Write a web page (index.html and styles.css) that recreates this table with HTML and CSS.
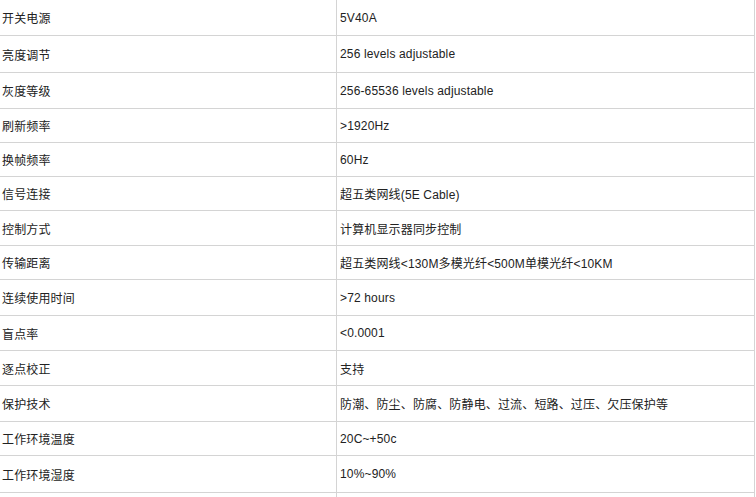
FILE: index.html
```html
<!DOCTYPE html>
<html lang="zh">
<head>
<meta charset="utf-8">
<title>参数</title>
<link rel="stylesheet" href="styles.css">
</head>
<body>
<div class="spec">
  <div class="row h36"><div class="k">开关电源</div><div class="v">5V40A</div></div>
  <div class="row h37"><div class="k">亮度调节</div><div class="v">256 levels adjustable</div></div>
  <div class="row h36"><div class="k">灰度等级</div><div class="v">256-65536 levels adjustable</div></div>
  <div class="row h34"><div class="k">刷新频率</div><div class="v">&gt;1920Hz</div></div>
  <div class="row h34"><div class="k">换帧频率</div><div class="v">60Hz</div></div>
  <div class="row h34"><div class="k">信号连接</div><div class="v">超五类网线(5E Cable)</div></div>
  <div class="row h35"><div class="k">控制方式</div><div class="v">计算机显示器同步控制</div></div>
  <div class="row h34"><div class="k">传输距离</div><div class="v">超五类网线&lt;130M多模光纤&lt;500M单模光纤&lt;10KM</div></div>
  <div class="row h36"><div class="k">连续使用时间</div><div class="v">&gt;72 hours</div></div>
  <div class="row h35"><div class="k">盲点率</div><div class="v">&lt;0.0001</div></div>
  <div class="row h35"><div class="k">逐点校正</div><div class="v">支持</div></div>
  <div class="row h36"><div class="k">保护技术</div><div class="v">防潮、防尘、防腐、防静电、过流、短路、过压、欠压保护等</div></div>
  <div class="row h34"><div class="k">工作环境温度</div><div class="v">20C~+50c</div></div>
  <div class="row h37"><div class="k">工作环境湿度</div><div class="v">10%~90%</div></div>
  <div class="row tail"><div class="k"></div><div class="v"></div></div>
</div>
</body>
</html>
```
FILE: styles.css
```css
html, body {
  margin: 0;
  padding: 0;
  background: #fff;
}
body {
  font-family: "Liberation Sans", Arial, "Noto Sans CJK SC", sans-serif;
  font-size: 12px;
  color: #222;
}
.spec {
  width: 755px;
  border-right: 1px solid #d4d4d4;
  box-sizing: border-box;
}
.row {
  display: grid;
  grid-template-columns: 337px 1fr;
  border-bottom: 1px solid #d4d4d4;
  box-sizing: border-box;
}
.h34 { height: 34px; }
.h35 { height: 35px; }
.h36 { height: 36px; }
.h37 { height: 37px; }
.tail {
  height: 4px;
  border-bottom: none;
}
.k, .v {
  display: flex;
  align-items: center;
  white-space: nowrap;
  letter-spacing: 0.15px;
}
.k {
  padding-left: 2px;
  border-right: 1px solid #d4d4d4;
}
.v {
  padding-left: 3px;
}
```
